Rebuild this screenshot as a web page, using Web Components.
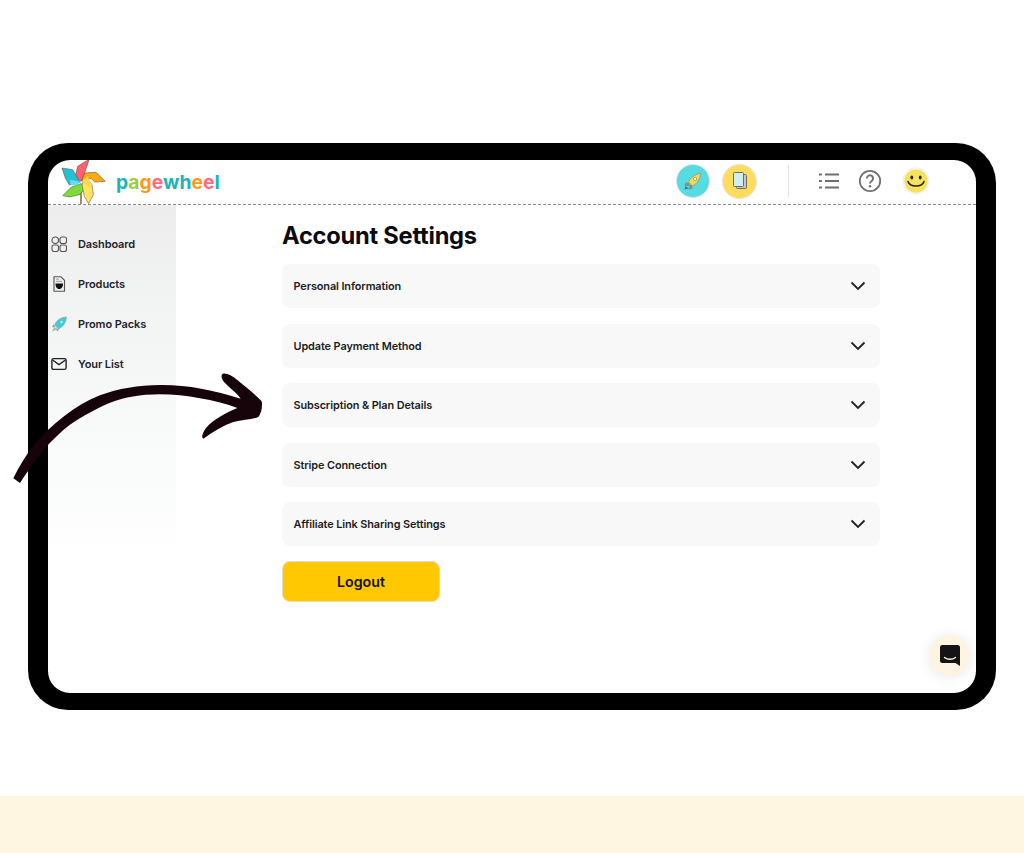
<!DOCTYPE html>
<html>
<head>
<meta charset="utf-8">
<title>pagewheel</title>
<style>
  html, body { margin: 0; padding: 0; }
  body { width: 1024px; height: 853px; overflow: hidden; background: #fff; font-family: "Inter", "Liberation Sans", sans-serif; position: relative; }
</style>
</head>
<body>
<pw-page>
  <pw-frame>
    <pw-header slot="header"></pw-header>
    <pw-sidebar slot="side">
      <pw-nav-item icon="dashboard">Dashboard</pw-nav-item>
      <pw-nav-item icon="products">Products</pw-nav-item>
      <pw-nav-item icon="promo">Promo Packs</pw-nav-item>
      <pw-nav-item icon="list">Your List</pw-nav-item>
    </pw-sidebar>
    <pw-settings slot="main" heading="Account Settings">
      <pw-accordion>Personal Information</pw-accordion>
      <pw-accordion>Update Payment Method</pw-accordion>
      <pw-accordion>Subscription &amp; Plan Details</pw-accordion>
      <pw-accordion>Stripe Connection</pw-accordion>
      <pw-accordion>Affiliate Link Sharing Settings</pw-accordion>
      <pw-button>Logout</pw-button>
    </pw-settings>
    <pw-chat slot="overlay"></pw-chat>
  </pw-frame>
</pw-page>
<pw-arrow></pw-arrow>

<script>
// page shell: white area with the tablet, cream band at the bottom
class PwPage extends HTMLElement {
  constructor() {
    super();
    this.attachShadow({ mode: 'open' }).innerHTML = `
      <style>
        :host { display: flex; flex-direction: column; height: 853px; }
        .stage { height: 796px; box-sizing: border-box; padding: 143px 28px 0; }
        .band { height: 57px; background: #fff6e2; }
      </style>
      <div class="stage"><slot></slot></div>
      <div class="band"></div>
    `;
  }
}

class PwFrame extends HTMLElement {
  constructor() {
    super();
    this.attachShadow({ mode: 'open' }).innerHTML = `
      <style>
        :host { display: block; width: 968px; height: 567px; box-sizing: border-box; background: #000; border-radius: 40px; padding: 17px 20px; }
        .screen { position: relative; height: 533px; background: #fff; border-radius: 22px; overflow: hidden; display: flex; flex-direction: column; }
        .body { display: flex; flex: 1; min-height: 0; }
      </style>
      <div class="screen">
        <slot name="header"></slot>
        <div class="body">
          <slot name="side"></slot>
          <slot name="main"></slot>
        </div>
        <slot name="overlay"></slot>
      </div>
    `;
  }
}

class PwHeader extends HTMLElement {
  constructor() {
    super();
    const colors = [['p','#1fb3b8'],['a','#9ccc3c'],['g','#ff9a1f'],['e','#ff6b7a'],['w','#1fb3b8'],['h','#1fb3b8'],['e','#ff9a1f'],['e','#ff6b7a'],['l','#1fb3b8']];
    const word = colors.map(c => `<span style="color:${c[1]}">${c[0]}</span>`).join('');
    this.attachShadow({ mode: 'open' }).innerHTML = `
      <style>
        :host { display: flex; align-items: center; height: 45px; box-sizing: border-box; border-bottom: 1px dashed #8a8a8a; padding: 0 46px 2px 8px; }
        .pin { margin: -6px 10px 0 0; display: block; }
        .word { font: 700 19.3px "Inter", sans-serif; letter-spacing: 0; margin-top: 1px; }
        .right { margin-left: auto; display: flex; align-items: center; }
        .dot { width: 34px; height: 34px; border-radius: 50%; box-sizing: border-box; border: 1px solid #e3e3e3; display: flex; align-items: center; justify-content: center; }
        .teal { background: #56dbe3; margin-right: 12px; }
        .yellow { background: #ffdb5e; width: 35px; height: 35px; }
        .rule { width: 1px; height: 32px; background: #e4e4e4; margin: 0 30px 0 31px; }
        svg { display: block; }
      </style>
      <svg class="pin" width="50" height="50" viewBox="0 0 150 150" overflow="visible">
        <path d="M75 100L75 153" stroke="#a0703c" stroke-width="5"/>
        <g stroke="#4b4b3c" stroke-width="1.6" stroke-linejoin="round">
          <path d="M148 85L120 58L85 60L76 85L105 76L116 87Z" fill="#ffab0c"/>
          <path d="M100 18L65 40L58 70L75 86L86 60Z" fill="#ff6174"/>
          <path d="M18 45L50 50L72 88L40 96L28 75Z" fill="#22c2d6"/>
          <path d="M20 128L45 103L75 92L94 102L70 125L40 132Z" fill="#7edc3a"/>
          <path d="M98 152L112 125L108 95L90 72L78 95L85 130Z" fill="#ffe365"/>
        </g>
        <path d="M42 80L74 86L64 96L44 96Z" fill="#5fe0ea"/>
        <path d="M78 85L94 70L108 95L96 102Z" fill="#ffd94d"/>
        <circle cx="76" cy="88" r="4" fill="#fff" stroke="#555" stroke-width="1"/>
      </svg>
      <div class="word">${word}</div>
      <div class="right">
        <div class="dot teal">
          <svg width="22" height="22" viewBox="0 0 22 22">
            <path d="M7 13L3.5 12.5L2.5 16L7.5 15.5ZM10 15L10.5 18.5L7 19.5L7.5 15Z" fill="#7f8f8c"/>
            <path d="M3.5 16L2.5 19.5L7 18.5Z" fill="#5f706e"/>
            <path d="M18.5 3.5C13.5 4 9 7 6.5 12L10.5 16C15.5 13.5 18 9 18.5 3.5Z" fill="#ffd84d" stroke="#8b9488" stroke-width=".8"/>
            <circle cx="13" cy="9" r="1.7" fill="#fff3b8" stroke="#6f7f7c" stroke-width=".6"/>
          </svg>
        </div>
        <div class="dot yellow">
          <svg width="18" height="20" viewBox="0 0 18 20">
            <rect x="5.5" y="3.5" width="10" height="14" rx="1" fill="#c9c9c0" stroke="#6c6c60"/>
            <rect x="2.5" y="1.5" width="10" height="14" rx="1" fill="#cdeff0" stroke="#6c6c60"/>
          </svg>
        </div>
        <div class="rule"></div>
        <svg width="20" height="18" viewBox="0 0 20 18" fill="none" stroke="#707070" stroke-width="1.9">
          <path d="M0 2.5H3M6 2.5H20M0 9H3M6 9H20M0 15.5H3M6 15.5H20"/>
        </svg>
        <svg width="24" height="24" viewBox="0 0 24 24" style="margin-left:19px">
          <circle cx="12" cy="12" r="10.2" fill="none" stroke="#707070" stroke-width="1.8"/>
          <path d="M8.9 9.4a3.1 3.1 0 1 1 4.9 2.5c-1.1.8-1.8 1.3-1.8 2.6" fill="none" stroke="#707070" stroke-width="1.9"/>
          <circle cx="12" cy="17.3" r="1.2" fill="#707070"/>
        </svg>
        <svg width="28" height="28" viewBox="0 0 28 28" style="margin-left:20px">
          <circle cx="14" cy="14" r="13.8" fill="#f3f3f0"/>
          <circle cx="14" cy="14" r="11.6" fill="#f5e25e"/>
          <ellipse cx="9.8" cy="10.5" rx="1.4" ry="2" fill="#222"/>
          <ellipse cx="18.2" cy="10.5" rx="1.4" ry="2" fill="#222"/>
          <path d="M6 14.5C8 20.5 20 20.5 22 14.5" fill="none" stroke="#222" stroke-width="1.6" stroke-linecap="round"/>
        </svg>
      </div>
    `;
  }
}

class PwSidebar extends HTMLElement {
  constructor() {
    super();
    this.attachShadow({ mode: 'open' }).innerHTML = `
      <style>
        :host { display: flex; flex-direction: column; width: 128px; height: 356px; flex: none; box-sizing: border-box; padding-top: 18.6px; background: linear-gradient(#ededed, #f7f8f8 55%, #fff); }
      </style>
      <slot></slot>
    `;
  }
}

const NAV_ICONS = {
  dashboard: `<g fill="none" stroke="#555" stroke-width="1.1"><rect x="1" y="1" width="6.5" height="6.5" rx="3.2"/><rect x="9" y="1" width="6.5" height="6.5" rx="2"/><rect x="1" y="9" width="6.5" height="6.5" rx="2"/><rect x="9" y="9" width="6.5" height="6.5" rx="2"/></g>`,
  products: `<path d="M3 .8H10L13.5 4.3V15.2H3Z" fill="#efefef" stroke="#555" stroke-width="1.1"/><path d="M4.5 7.5H12C12 11.5 10.2 13 8.2 13C6.2 13 4.5 11.5 4.5 7.5Z" fill="#111"/><path d="M5 3.2H8M5 5.4H11" stroke="#888" stroke-width=".8"/>`,
  promo: `<path d="M2.5 8.5L1 11L4.5 11.5ZM8 13.5L6 15.5L5 12Z" fill="#8f9a9a"/><path d="M15.5 1C10.5 1.2 6 3.5 3.5 9L7.5 13C12.5 10.5 15.2 6 15.5 1Z" fill="#45cdd6" stroke="#86a0a0" stroke-width=".6"/><path d="M3.5 11L1 15.5L5.5 13.5Z" fill="#a7b0b0"/><circle cx="10.5" cy="6" r="1.2" fill="#bdf3f6"/>`,
  list: `<rect x=".9" y="2.6" width="14.2" height="10.8" rx="1.6" fill="none" stroke="#222" stroke-width="1.4"/><path d="M1.5 4L8 8.6L14.5 4" fill="none" stroke="#222" stroke-width="1.4"/>`
};

class PwNavItem extends HTMLElement {
  constructor() {
    super();
    this.attachShadow({ mode: 'open' });
  }

  connectedCallback() {
    const icon = NAV_ICONS[this.getAttribute('icon')] || '';
    this.shadowRoot.innerHTML = `
      <style>
        :host { display: flex; align-items: center; height: 40px; padding-left: 3px; font: 600 11px "Inter", sans-serif; color: #23232b; letter-spacing: -.1px; }
        svg { width: 16px; height: 16px; margin-right: 11px; flex: none; }
      </style>
      <svg viewBox="0 0 16 16">${icon}</svg>
      <slot></slot>
    `;
  }
}

class PwSettings extends HTMLElement {
  constructor() {
    super();
    this.attachShadow({ mode: 'open' }).innerHTML = `
      <style>
        :host { display: block; width: 598px; margin-left: 106px; }
        h1 { margin: 15px 0 12px; font: 700 23.7px/32px "Inter", sans-serif; color: #0b0b0f; letter-spacing: -.25px; }
        .stack { display: flex; flex-direction: column; gap: 15.5px; }
      </style>
      <h1></h1>
      <div class="stack"><slot></slot></div>
    `;
  }

  connectedCallback() {
    this.shadowRoot.querySelector('h1').textContent = this.getAttribute('heading');
  }
}

class PwAccordion extends HTMLElement {
  constructor() {
    super();
    this.attachShadow({ mode: 'open' }).innerHTML = `
      <style>
        :host { display: flex; align-items: center; justify-content: space-between; height: 44px; box-sizing: border-box; padding: 0 14px 0 11.5px; background: #f8f8f8; border-radius: 8px; font: 600 10.9px "Inter", sans-serif; color: #1c1c22; letter-spacing: -.1px; }
        svg { display: block; }
      </style>
      <slot></slot>
      <svg width="16" height="10" viewBox="0 0 16 10" fill="none" stroke="#222" stroke-width="1.8"><path d="M1.5 1.5L8 8L14.5 1.5"/></svg>
    `;
  }
}

class PwButton extends HTMLElement {
  constructor() {
    super();
    this.attachShadow({ mode: 'open' }).innerHTML = `
      <style>
        :host { display: flex; align-items: center; justify-content: center; width: 158px; height: 41px; margin-top: -.5px; box-sizing: border-box; background: #ffc800; border: 1px solid #e3dcc4; border-radius: 8px; font: 600 14.2px "Inter", sans-serif; color: #111; }
      </style>
      <slot></slot>
    `;
  }
}

// chat bubble sits over the corner of the screen
class PwChat extends HTMLElement {
  constructor() {
    super();
    this.attachShadow({ mode: 'open' }).innerHTML = `
      <style>
        :host { position: absolute; right: 6px; bottom: 17px; width: 41px; height: 41px; border-radius: 50%; background: #fdf5e1; box-shadow: 0 1px 14px rgba(0,0,0,.09); display: flex; align-items: center; justify-content: center; }
        svg { display: block; }
      </style>
      <svg width="20" height="21" viewBox="0 0 20 21">
        <path d="M2.5 0H17.5A2.5 2.5 0 0 1 20 2.5V21L15.5 18H2.5A2.5 2.5 0 0 1 0 15.5V2.5A2.5 2.5 0 0 1 2.5 0Z" fill="#141414"/>
        <path d="M4.5 12.5C7.5 14.8 12.5 14.8 15.5 12.5" fill="none" stroke="#fdf5e1" stroke-width="1.3" stroke-linecap="round"/>
      </svg>
    `;
  }
}

// brush stroke arrow lying over the tablet
class PwArrow extends HTMLElement {
  constructor() {
    super();
    this.attachShadow({ mode: 'open' }).innerHTML = `
      <style>
        :host { position: absolute; left: 0; top: 360px; width: 280px; height: 140px; pointer-events: none; }
        svg { display: block; }
      </style>
      <svg width="280" height="140" viewBox="0 0 840 420">
        <path fill="#17040a" d="M40 355C58 318 78 285 100 258C125 226 155 197 190 170C225 143 260 122 300 106C355 85 415 76 480 75C560 74 640 90 722 116C712 100 690 85 672 66C664 56 662 46 668 41C680 38 695 46 712 60C735 79 762 100 785 124C788 140 784 158 776 170C755 180 728 178 700 186C670 196 640 215 610 236C603 232 608 218 618 204C640 178 680 158 712 144C675 130 640 122 600 115C560 107 520 103 480 103C420 103 375 112 330 128C310 135 295 145 280 152C245 170 215 188 190 210C160 238 135 262 115 290C98 314 78 340 60 369Z"/>
      </svg>
    `;
  }
}

customElements.define('pw-page', PwPage);
customElements.define('pw-frame', PwFrame);
customElements.define('pw-header', PwHeader);
customElements.define('pw-sidebar', PwSidebar);
customElements.define('pw-nav-item', PwNavItem);
customElements.define('pw-settings', PwSettings);
customElements.define('pw-accordion', PwAccordion);
customElements.define('pw-button', PwButton);
customElements.define('pw-chat', PwChat);
customElements.define('pw-arrow', PwArrow);
</script>
</body>
</html>
